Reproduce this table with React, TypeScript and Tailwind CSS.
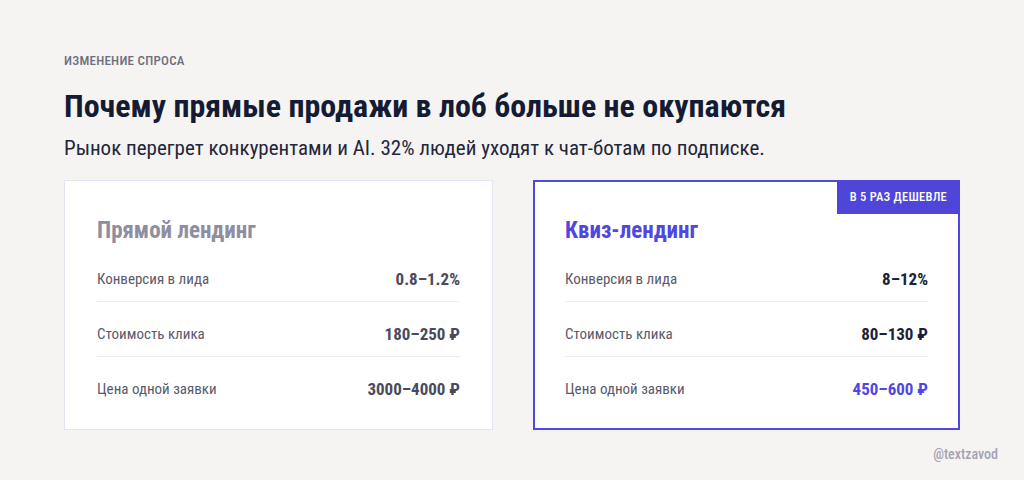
type Row = { label: string; value: string; accent?: boolean };

function Card({
  title,
  rows,
  highlight,
}: {
  title: string;
  rows: Row[];
  highlight?: boolean;
}) {
  return (
    <div
      className={
        highlight
          ? "relative flex-1 bg-white border-2 border-[#5046e0] px-[30px] pt-[33px] pb-[29px]"
          : "relative flex-1 bg-white border border-[#e4e4f4] px-[32px] pt-[34px] pb-[30px]"
      }
    >
      {highlight && (
        <div className="absolute -top-[2px] -right-[2px] h-[34px] px-[13px] flex items-center bg-[#4f46d9] text-white text-[12.5px] font-medium tracking-[0.02em] leading-none">
          В 5 РАЗ ДЕШЕВЛЕ
        </div>
      )}
      <div
        className={
          highlight
            ? "text-[23px] leading-[32px] font-bold text-[#5046e0]"
            : "text-[23px] leading-[32px] font-bold text-[#8e8e9f]"
        }
      >
        {title}
      </div>
      <div className="flex flex-col">
        {rows.map((r, i) => (
          <div
            key={r.label}
            className={
              i < rows.length - 1
                ? "flex items-center justify-between pt-[22px] pb-[12px] border-b border-[#ececf7]"
                : "flex items-center justify-between pt-[22px]"
            }
          >
            <span className="text-[15px] leading-[20px] text-[#5a5a6b]">{r.label}</span>
            <span
              className={
                r.accent
                  ? "text-[17px] leading-[20px] font-bold text-[#5046e0]"
                  : highlight
                  ? "text-[17px] leading-[20px] font-bold text-[#1b1f38]"
                  : "text-[17px] leading-[20px] font-bold text-[#4a4a5c]"
              }
            >
              {r.value}
            </span>
          </div>
        ))}
      </div>
    </div>
  );
}

export default function App() {
  return (
    <div className="w-[1024px] h-[480px] bg-[#f5f4f2] px-16 pt-[53px] flex flex-col font-['Roboto_Condensed','Roboto',sans-serif] overflow-hidden">
      <div className="text-[13px] leading-[16px] font-medium tracking-[0.02em] text-[#6e6e80]">
        ИЗМЕНЕНИЕ СПРОСА
      </div>
      <h1 className="mt-[17px] text-[32px] leading-[40px] font-bold text-[#151b33]">
        Почему прямые продажи в лоб больше не окупаются
      </h1>
      <p className="mt-[8px] text-[21px] leading-[28px] text-[#23263a]">
        Рынок перегрет конкурентами и AI. 32% людей уходят к чат-ботам по подписке.
      </p>
      <div className="mt-[18px] flex gap-10">
        <Card
          title="Прямой лендинг"
          rows={[
            { label: "Конверсия в лида", value: "0.8–1.2%" },
            { label: "Стоимость клика", value: "180–250 ₽" },
            { label: "Цена одной заявки", value: "3000–4000 ₽" },
          ]}
        />
        <Card
          highlight
          title="Квиз-лендинг"
          rows={[
            { label: "Конверсия в лида", value: "8–12%" },
            { label: "Стоимость клика", value: "80–130 ₽" },
            { label: "Цена одной заявки", value: "450–600 ₽", accent: true },
          ]}
        />
      </div>
      <div className="mt-[14px] self-end -mr-[38px] text-[14px] leading-[20px] font-medium text-[#a3a3b3]">
        @textzavod
      </div>
    </div>
  );
}
